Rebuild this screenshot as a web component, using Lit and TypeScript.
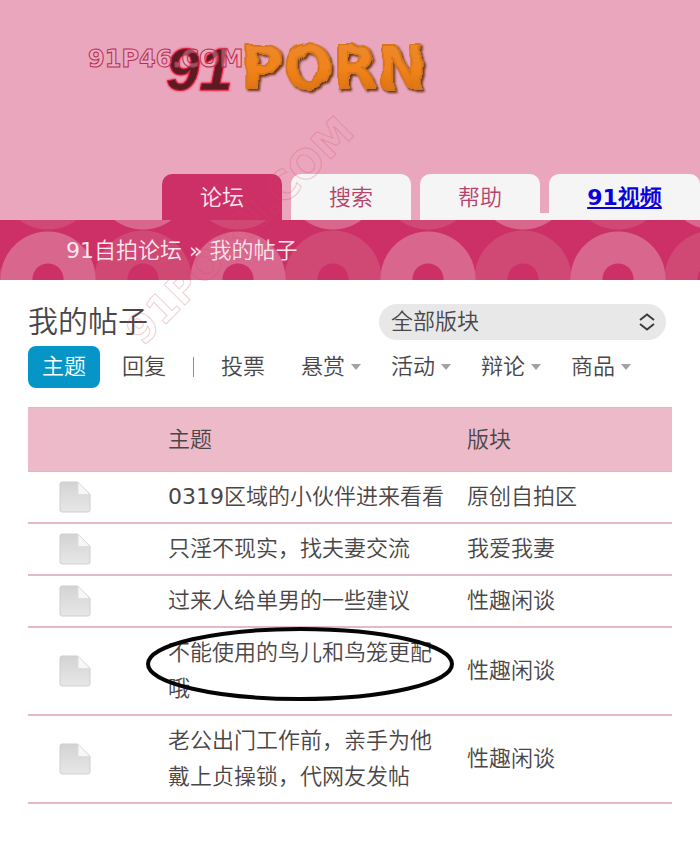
import { LitElement, html, css, svg, nothing } from "lit";
import { customElement } from "lit/decorators.js";

interface Thread {
  title: string;
  board: string;
  circled?: boolean;
}

const threads: Thread[] = [
  { title: "0319区域的小伙伴进来看看", board: "原创自拍区" },
  { title: "只淫不现实，找夫妻交流", board: "我爱我妻" },
  { title: "过来人给单男的一些建议", board: "性趣闲谈" },
  { title: "不能使用的鸟儿和鸟笼更配哦", board: "性趣闲谈", circled: true },
  { title: "老公出门工作前，亲手为他戴上贞操锁，代网友发帖", board: "性趣闲谈" },
];

const filters = [
  { label: "投票", menu: false },
  { label: "悬赏", menu: true },
  { label: "活动", menu: true },
  { label: "辩论", menu: true },
  { label: "商品", menu: true },
];

@customElement("app-root")
export class AppRoot extends LitElement {
  static styles = css`
    :host {
      display: block;
      position: relative;
      min-height: 100vh;
      overflow: hidden;
      background: #fff;
      color: #4a4648;
      font: 400 22px/36px "DejaVu Sans", "Noto Sans CJK SC DemiLight", "Noto Sans CJK SC", sans-serif;
    }
    a {
      color: inherit;
      text-decoration: none;
    }
    header {
      background: #eaa6bd;
      padding-top: 24px;
    }
    .logo {
      display: block;
      width: 360px;
      height: 80px;
      margin: 0 0 70px 80px;
    }
    .orange {
      font: 700 58px "DejaVu Sans", sans-serif;
    }
    .dark {
      font: italic 700 60px "Liberation Sans", sans-serif;
    }
    .stamp {
      font: 700 24px "DejaVu Sans", sans-serif;
    }
    .tabs {
      display: flex;
      margin: 0;
      padding: 0 0 0 153px;
      list-style: none;
    }
    .tabs li {
      padding-left: 9px;
      flex: 0 0 120px;
    }
    .tabs li:last-child {
      flex: 1 0 151px;
      background: linear-gradient(#f5f5f5, #f5f5f5) bottom / 100% 7px no-repeat;
    }
    .tabs a {
      display: block;
      height: 46px;
      line-height: 48px;
      text-align: center;
      color: #b8426c;
      background: #f5f5f5;
      border-radius: 10px 10px 0 0;
    }
    .tabs .current {
      background: #cd3066;
      color: #fde6ee;
    }
    .tabs .video {
      color: #0a00dc;
      font-weight: 700;
      text-decoration: underline;
    }
    .crumbs {
      height: 60px;
      line-height: 62px;
      padding-left: 66px;
      color: #fde6ee;
      background:
        radial-gradient(circle at 48px 59px, #cd3066 15px, #d9668d 16px 47px, transparent 48px) 0 0 / 190px 60px,
        radial-gradient(circle at 48px 59px, #cd3066 15px, #d04874 16px 48px, transparent 49px) 95px 0 / 190px 60px,
        radial-gradient(circle at 48px -38px, #d9668d 47px, transparent 48px) 95px 0 / 190px 60px,
        radial-gradient(circle at 48px -38px, #d04874 47px, transparent 48px) 0 0 / 190px 60px,
        #cd3066;
    }
    main {
      padding: 24px 28px 38px;
    }
    .heading {
      display: flex;
      align-items: center;
      justify-content: space-between;
      height: 36px;
      padding-right: 6px;
    }
    h1 {
      margin: 0;
      font-size: 30px;
      font-weight: 400;
    }
    .picker {
      position: relative;
      width: 287px;
      height: 36px;
    }
    select {
      appearance: none;
      width: 100%;
      height: 36px;
      padding: 0 40px 0 12px;
      border: 0;
      border-radius: 18px;
      background: #e8e8e8;
      color: inherit;
      font: inherit;
    }
    .chevrons {
      position: absolute;
      right: 10px;
      top: 9px;
      pointer-events: none;
    }
    .filters {
      display: flex;
      align-items: center;
      gap: 8px;
      margin: 6px 0 19px;
    }
    .filters a {
      display: flex;
      align-items: center;
      gap: 6px;
      height: 42px;
      padding: 0 14px;
      border-radius: 8px;
    }
    .filters .menu {
      padding-right: 8px;
    }
    .filters .active {
      background: #0596c7;
      color: #fff;
    }
    .bar {
      width: 1px;
      height: 20px;
      margin: 0 5px;
      background: #8c8c8c;
    }
    .caret {
      border: 5px solid transparent;
      border-top: 6px solid #a2a2a2;
      border-bottom: 0;
    }
    table {
      width: 100%;
      table-layout: fixed;
      border-collapse: separate;
      border-spacing: 0;
    }
    .c-icon {
      width: 140px;
    }
    .c-title {
      width: 299px;
    }
    th {
      padding: 14px 0 13px;
      text-align: left;
      font-weight: 400;
      background: #edbaca;
      border-top: 1px solid #e6b3c2;
      border-bottom: 1px solid #e3b4c2;
    }
    td {
      position: relative;
      padding: 7px 0;
      border-bottom: 2px solid #e6b9c6;
    }
    td:nth-child(2) {
      padding-right: 18px;
    }
    .page {
      display: block;
      margin-left: 30px;
    }
    .ring {
      position: absolute;
      left: -23px;
      top: -1px;
      pointer-events: none;
      z-index: 1;
    }
    .watermark {
      position: absolute;
      left: 100px;
      top: 90px;
      pointer-events: none;
      font: 700 40px "DejaVu Sans", sans-serif;
    }
  `;

  private logo() {
    return svg`
      <svg class="logo" viewBox="80 24 360 80" role="img" aria-label="91PORN">
        <defs>
          <linearGradient id="paint" x1="0" y1="0" x2="0" y2="1">
            <stop offset="0" stop-color="#e88a35" />
            <stop offset="0.5" stop-color="#f2831a" />
            <stop offset="1" stop-color="#d56c10" />
          </linearGradient>
          <filter id="bevel" x="-5%" y="-10%" width="112%" height="125%">
            <feTurbulence type="fractalNoise" baseFrequency="0.07" numOctaves="2" seed="4" result="noise" />
            <feDisplacementMap in="SourceGraphic" in2="noise" scale="7" result="rough" />
            <feDropShadow in="rough" dx="2" dy="2" stdDeviation="1" flood-color="#5b2503" flood-opacity="0.9" />
          </filter>
          <filter id="glow" x="-15%" y="-15%" width="130%" height="130%">
            <feDropShadow dx="0" dy="0" stdDeviation="1" flood-color="#ff1238" flood-opacity="1" />
          </filter>
        </defs>
        <text class="dark" x="166" y="90" fill="#5a1a24" stroke="#d81c3c" stroke-width="1" filter="url(#glow)">91</text>
        <text class="orange" x="241" y="88" fill="url(#paint)" stroke="#d8761e" stroke-width="2" stroke-linejoin="round" filter="url(#bevel)">PORN</text>
        <text class="stamp" x="88" y="67" fill="#f3b6c8" fill-opacity="0.4" stroke="#b62f51" stroke-width="1">91P46.COM</text>
      </svg>`;
  }

  private pageIcon() {
    return svg`
      <svg class="page" width="34" height="34" viewBox="0 0 34 34" aria-hidden="true">
        <defs>
          <linearGradient id="sheet" x1="0" y1="0" x2="0" y2="1">
            <stop offset="0" stop-color="#d3d3d3" />
            <stop offset="1" stop-color="#e7e7e7" />
          </linearGradient>
        </defs>
        <path d="M4 2H20L32 14V30Q32 32 30 32H4Q2 32 2 30V4Q2 2 4 2Z" fill="url(#sheet)" stroke="#cfcfcf" />
        <path d="M20 2V14.500H32Z" fill="#f7f7f7" stroke="#dedede" />
      </svg>`;
  }

  private ring() {
    return svg`
      <svg class="ring" width="310" height="76" viewBox="0 0 310 76" aria-hidden="true">
        <ellipse cx="155" cy="37" rx="152" ry="35" fill="none" stroke="#050505" stroke-width="4" />
      </svg>`;
  }

  render() {
    return html`
      <header>
        ${this.logo()}
        <nav aria-label="主导航">
          <ul class="tabs">
            <li><a class="current" href="#forum">论坛</a></li>
            <li><a href="#search">搜索</a></li>
            <li><a href="#help">帮助</a></li>
            <li><a class="video" href="#video">91视频</a></li>
          </ul>
        </nav>
      </header>
      <nav class="crumbs"><a href="#home">91自拍论坛</a> » 我的帖子</nav>
      <main>
        <div class="heading">
          <h1>我的帖子</h1>
          <div class="picker">
            <select aria-label="版块">
              <option>全部版块</option>
            </select>
            <svg class="chevrons" width="18" height="18" viewBox="0 0 18 18" fill="none" stroke="#3c3c3c" stroke-width="2">
              <path d="M2 7L9 1.500L16 7M2 11L9 16.500L16 11" />
            </svg>
          </div>
        </div>
        <nav class="filters">
          <a class="active" href="#threads">主题</a>
          <a href="#replies">回复</a>
          <span class="bar"></span>
          ${filters.map(
            (f) => html`<a class=${f.menu ? "menu" : ""} href="#filter"
              >${f.label}${f.menu ? html`<span class="caret"></span>` : nothing}</a
            >`
          )}
        </nav>
        <table>
          <colgroup>
            <col class="c-icon" />
            <col class="c-title" />
            <col />
          </colgroup>
          <thead>
            <tr>
              <th></th>
              <th scope="col">主题</th>
              <th scope="col">版块</th>
            </tr>
          </thead>
          <tbody>
            ${threads.map(
              (t) => html`<tr>
                <td>${this.pageIcon()}</td>
                <td><a href="#thread">${t.title}</a>${t.circled ? this.ring() : nothing}</td>
                <td><a href="#board">${t.board}</a></td>
              </tr>`
            )}
          </tbody>
        </table>
      </main>
      <svg class="watermark" width="280" height="270" viewBox="0 0 280 270" aria-hidden="true">
        <text transform="translate(43 257) rotate(-45)" fill="none" stroke="#d84860" stroke-opacity="0.3">91PORN.COM</text>
      </svg>
    `;
  }
}
